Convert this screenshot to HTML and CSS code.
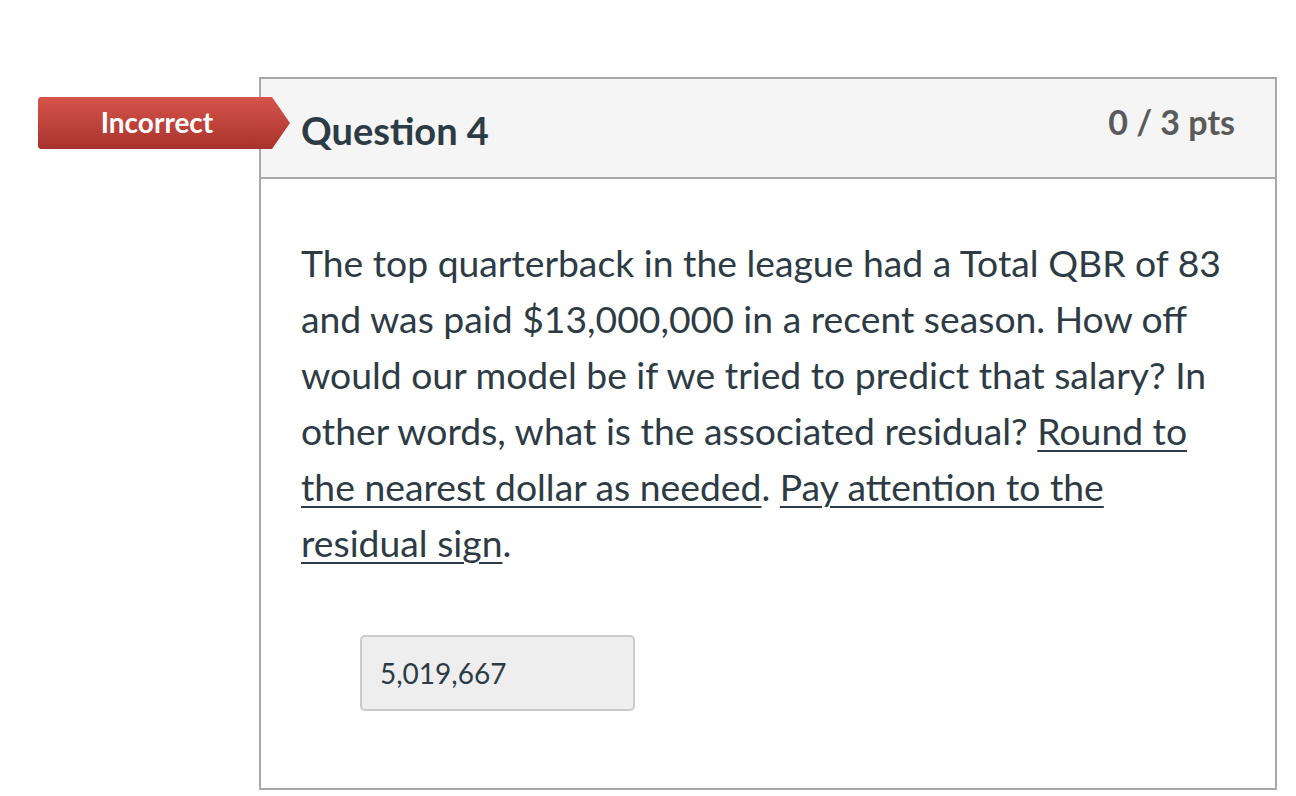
FILE: index.html
```html
<!DOCTYPE html>
<html>
<head>
<meta charset="utf-8">
<link rel="stylesheet" href="styles.css">
</head>
<body>
<div class="page">
  <div class="question">
    <div class="badge">Incorrect</div>
    <div class="q-header">
      <h2 class="q-title">Question 4</h2>
      <div class="q-points">0 / 3 pts</div>
    </div>
    <div class="q-body">
      <p class="q-text">The top quarterback in the league had a Total QBR of 83 and was paid $13,000,000 in a recent season. How off would our model be if we tried to predict that salary? In other words, what is the associated residual? <u>Round to the nearest dollar as needed</u>. <u>Pay attention to the residual sign</u>.</p>
      <div class="answer">5,019,667</div>
    </div>
  </div>
</div>
</body>
</html>
```
FILE: styles.css
```css
html, body {
  margin: 0;
  padding: 0;
  background: #fff;
  overflow: hidden;
}
body {
  font-family: Lato, "Noto Sans", sans-serif;
  color: #2d3b45;
}
.page {
  padding: 77px 19px 0 259px;
  height: 796px;
  box-sizing: border-box;
}
.question {
  position: relative;
  border: 2px solid #a8a8a8;
  height: 713px;
  box-sizing: border-box;
}
.badge {
  position: absolute;
  left: -223px;
  top: 18px;
  width: 252px;
  height: 52px;
  box-sizing: border-box;
  padding-right: 14px;
  padding-bottom: 3px;
  background: linear-gradient(#d6544c, #a8332c);
  clip-path: polygon(0 2px, 2px 0, 234px 0, 252px 26px, 234px 52px, 2px 52px, 0 50px);
  color: #fff;
  font-size: 28px;
  font-weight: 700;
  display: flex;
  align-items: center;
  justify-content: center;
}
.q-header {
  display: flex;
  justify-content: space-between;
  align-items: flex-start;
  background: #f5f5f5;
  border-bottom: 2px solid #a8a8a8;
  height: 98px;
  padding: 0 40px;
}
.q-title {
  margin: 0;
  padding-top: 29px;
  font-size: 38px;
  font-weight: 700;
  line-height: 44px;
  color: #2d3b45;
}
.q-points {
  padding-top: 23px;
  font-size: 34px;
  font-weight: 700;
  line-height: 40px;
  color: #5a5a5a;
}
.q-body {
  padding: 56px 50px 0 40px;
}
.q-text {
  margin: 0;
  font-size: 37.3px;
  line-height: 56px;
}
.q-text u {
  text-decoration-thickness: 2px;
  text-underline-offset: 5px;
}
.answer {
  margin: 64px 0 0 59px;
  width: 275px;
  height: 76px;
  box-sizing: border-box;
  background: #eeeeee;
  border: 2px solid #cbcbcb;
  border-radius: 5px;
  padding: 0 0 0 18px;
  display: flex;
  align-items: center;
  font-size: 28px;
  color: #2d3b45;
}
```
